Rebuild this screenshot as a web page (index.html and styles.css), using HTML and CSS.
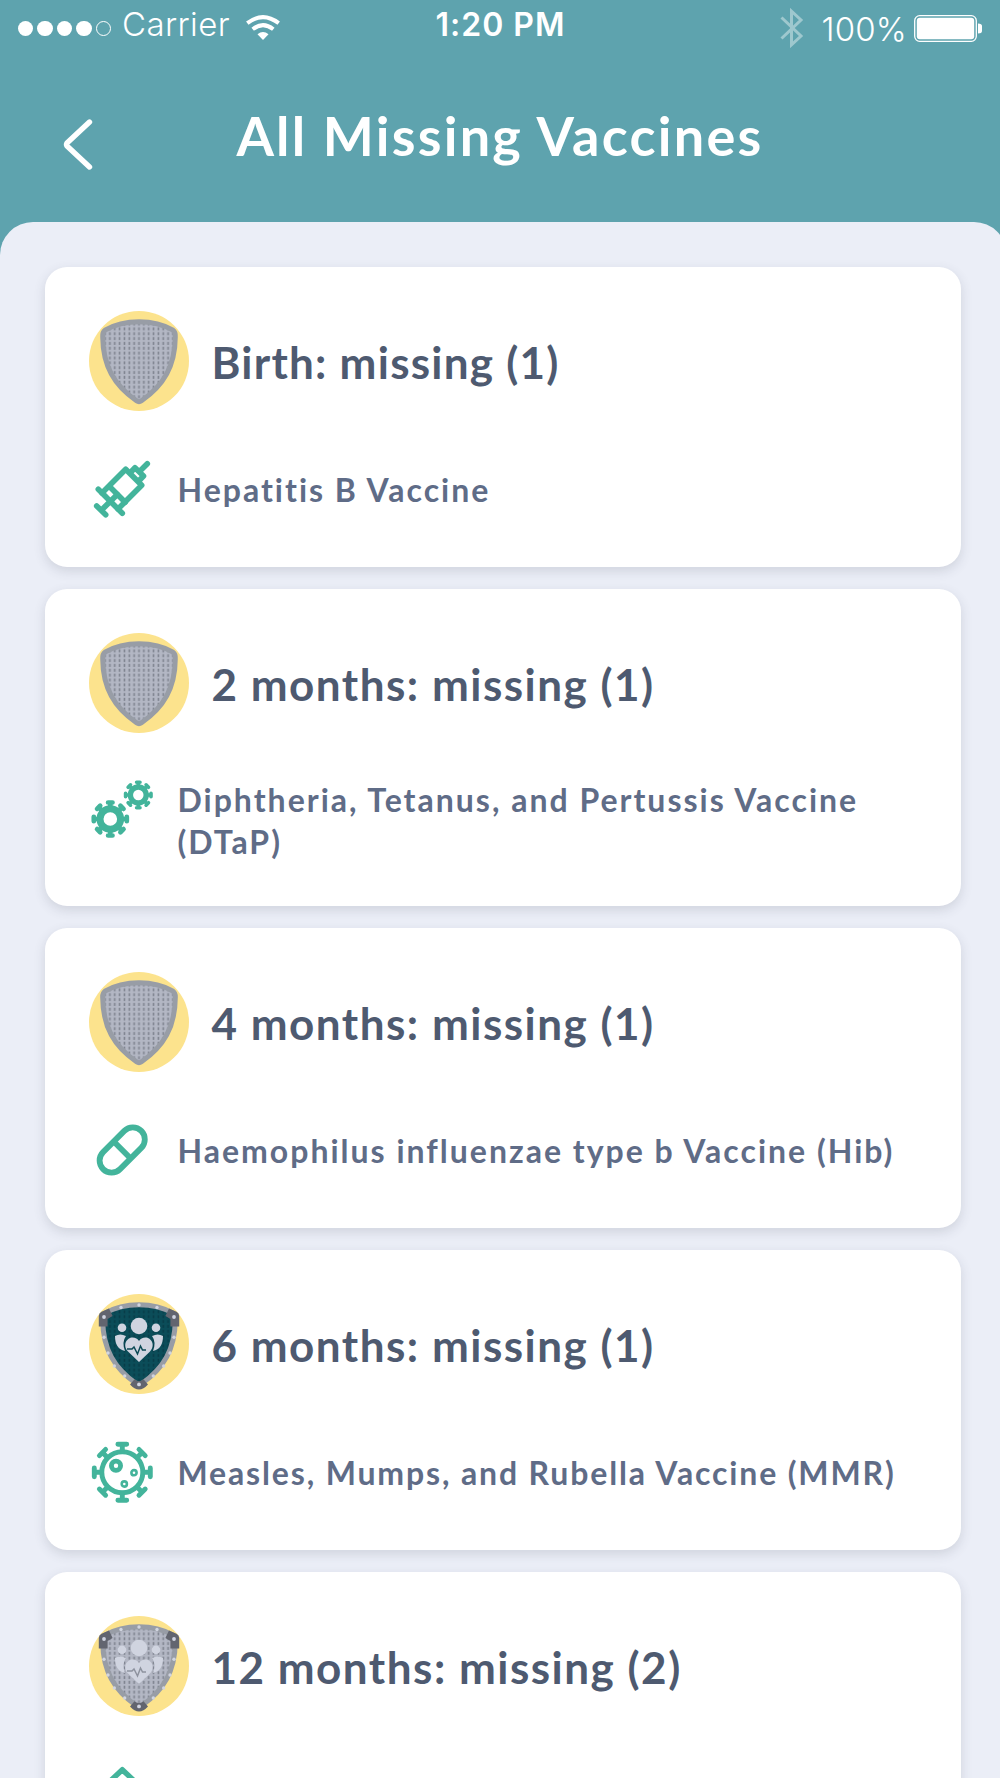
FILE: index.html
```html
<!DOCTYPE html>
<html lang="en">
<head>
    <meta charset="UTF-8">
    <meta name="viewport" content="width=device-width, initial-scale=1.0">
    <title>All Missing Vaccines</title>
    <link rel="stylesheet" href="styles.css">
</head>
<body>
    <!-- Shared shapes -->
    <svg class="defs" width="0" height="0">
        <defs>
            <pattern id="mesh" x="47.6" y="1" width="4.85" height="4.85" patternUnits="userSpaceOnUse">
                <rect width="4.85" height="4.85" fill="#b3b7c4"/>
                <rect x="1.6" y="0.8" width="1.6" height="3" fill="#7f8490"/>
            </pattern>
            <pattern id="mesh-teal" x="47.6" y="1" width="4.85" height="4.85" patternUnits="userSpaceOnUse">
                <rect width="4.85" height="4.85" fill="#0b4d59"/>
                <rect x="1.6" y="0.8" width="1.6" height="3" fill="#083c48"/>
            </pattern>
            <path id="shield" d="M50 10.8 C63 10.8 75 14 84 19.2 Q86.6 21 86.3 26 C86 55 75 74 52.5 89.8 Q50 91.6 47.5 89.8 C25 74 14 55 13.7 26 Q13.4 21 16 19.2 C25 14 37 10.8 50 10.8Z"/>
            <g id="corners" fill="#62656f">
                <path d="M9.8 32.5 V22 Q9.8 19 12.5 17.8 L20 14.4 L23.6 22 L18.6 25 V32.5Z"/>
                <path d="M90.2 32.5 V22 Q90.2 19 87.5 17.8 L80 14.4 L76.4 22 L81.4 25 V32.5Z"/>
                <path d="M45.5 85.2 Q50 89 54.5 85.2 L59 90.5 Q50 100.5 41 90.5Z"/>
            </g>
            <g id="rivets" fill="#d0d4e0">
                <circle cx="50" cy="11" r="1.7"/>
                <circle cx="32" cy="13.5" r="1.7"/><circle cx="68" cy="13.5" r="1.7"/>
                <circle cx="15" cy="23" r="1.9"/><circle cx="85" cy="23" r="1.9"/>
                <circle cx="15" cy="43.3" r="1.7"/><circle cx="85" cy="43.3" r="1.7"/>
                <circle cx="19" cy="59" r="1.7"/><circle cx="81" cy="59" r="1.7"/>
                <circle cx="25.3" cy="72" r="1.7"/><circle cx="74.7" cy="72" r="1.7"/>
                <circle cx="35.7" cy="82" r="1.7"/><circle cx="64.3" cy="82" r="1.7"/>
                <circle cx="50" cy="90.4" r="1.9"/>
            </g>
            <g id="family" fill="#d0d4e0">
                <circle cx="50" cy="32" r="8.3"/>
                <circle cx="33" cy="33.7" r="4.3"/>
                <circle cx="67" cy="33.7" r="4.3"/>
                <path d="M26 42 Q31 39 37 42 Q32.5 48 36 57 Q26 55 26 42Z"/>
                <path d="M74 42 Q69 39 63 42 Q67.5 48 64 57 Q74 55 74 42Z"/>
                <path d="M50 68 L39 57.5 C33 51 38 43.5 43.5 43.5 Q48 43.5 50 47 Q52 43.5 56.5 43.5 C62 43.5 67 51 61 57.5Z"/>
            </g>
            <path id="pulse" d="M38 55 H43 L45 53 L48.5 60 L51.5 52 L53.5 56 H57" fill="none" stroke-width="1.5"/>
            <path id="spike" d="M0 -12 V-16.500 M-2.2 -16.500 H2.2"/>
            <g id="gear" stroke="#43b49b" stroke-width="4.700" stroke-linecap="round" fill="none">
                <circle r="10.3" stroke-width="7"/>
                <use href="#spike"/>
                <use href="#spike" transform="rotate(45)"/>
                <use href="#spike" transform="rotate(90)"/>
                <use href="#spike" transform="rotate(135)"/>
                <use href="#spike" transform="rotate(180)"/>
                <use href="#spike" transform="rotate(225)"/>
                <use href="#spike" transform="rotate(270)"/>
                <use href="#spike" transform="rotate(315)"/>
            </g>
            <path id="arm" d="M0 -21 V-28 M-4.4 -28 H4.4"/>
        </defs>
    </svg>

    <header class="header">
        <div class="status-bar">
            <div class="status-left">
                <div class="signal">
                    <span class="dot"></span>
                    <span class="dot"></span>
                    <span class="dot"></span>
                    <span class="dot"></span>
                    <span class="dot empty"></span>
                </div>
                <span class="carrier">Carrier</span>
                <svg class="wifi" width="34" height="26" viewBox="0 0 34 26" fill="none" stroke="#fff">
                    <path d="M1.3 8.2 Q17 -3.9 32.7 8.2" stroke-width="4"/>
                    <path d="M6.7 14.2 Q17 6 27.3 14.2" stroke-width="4"/>
                    <path d="M11.5 19.3 Q17 14.8 22.5 19.3 L17 25Z" fill="#fff" stroke="none"/>
                </svg>
            </div>
            <span class="time">1:20 PM</span>
            <div class="status-right">
                <svg class="bluetooth" width="24" height="40" viewBox="0 0 24 40" fill="none" stroke="#fff" stroke-width="3">
                    <path d="M1.5 9.5 L21 28 L11.5 36.8 V3.2 L21 12 L1.5 30.5"/>
                </svg>
                <span class="percent">100%</span>
                <svg class="battery" width="69" height="28" viewBox="0 0 69 28">
                    <rect x="0.7" y="0.7" width="61.6" height="25.6" rx="5" fill="none" stroke="#fff" stroke-width="1.3"/>
                    <rect x="2.8" y="2.8" width="57.4" height="21.4" rx="3" fill="#fff"/>
                    <path d="M64 8.5 Q68 8.5 68 11 V16 Q68 18.5 64 18.5Z" fill="#fff"/>
                </svg>
            </div>
        </div>
        <div class="title-bar">
            <svg class="back" width="30" height="54" viewBox="0 0 30 54" fill="none" stroke="#fff" stroke-width="5.4" stroke-linecap="round" stroke-linejoin="round">
                <path d="M26.5 4 L4 25 Q3 26.5 4 28 L26.5 49"/>
            </svg>
            <h1>All Missing Vaccines</h1>
        </div>
    </header>

    <main class="content">
        <section class="card">
            <div class="card-header">
                <svg class="badge" viewBox="0 0 100 100">
                    <circle cx="50" cy="50" r="50" fill="#fce38d"/>
                    <use href="#shield" fill="url(#mesh)" stroke="#989da6" stroke-width="5"/>
                </svg>
                <h2 class="birth">Birth: missing (1)</h2>
            </div>
            <div class="vaccine">
                <svg class="icon" viewBox="0 0 66 66" fill="none" stroke="#43b49b" stroke-width="5.6" stroke-linecap="round" stroke-linejoin="round">
                    <path d="M58.3 6.7 L51 14 M41.5 15.5 L46 10.8 L54.5 19 L50 23.7"/>
                    <path d="M13 36 L36.7 12.3 L52.7 28.3 L29 52"/>
                    <path d="M9.3 32.3 L33.3 56.3 M20.5 29.5 L36.2 45.2"/>
                    <path d="M28.3 37.5 L12.3 53.3 M7.7 49 L16.7 57.7"/>
                </svg>
                <p>Hepatitis B Vaccine</p>
            </div>
        </section>

        <section class="card">
            <div class="card-header">
                <svg class="badge" viewBox="0 0 100 100">
                    <circle cx="50" cy="50" r="50" fill="#fce38d"/>
                    <use href="#shield" fill="url(#mesh)" stroke="#989da6" stroke-width="5"/>
                </svg>
                <h2>2 months: missing (1)</h2>
            </div>
            <div class="vaccine two-lines">
                <svg class="icon" viewBox="0 0 66 66">
                    <use href="#gear" transform="translate(21.3 40)"/>
                    <use href="#gear" transform="translate(49.3 16) scale(0.77)"/>
                </svg>
                <p>Diphtheria, Tetanus, and Pertussis Vaccine<br>(DTaP)</p>
            </div>
        </section>

        <section class="card">
            <div class="card-header">
                <svg class="badge" viewBox="0 0 100 100">
                    <circle cx="50" cy="50" r="50" fill="#fce38d"/>
                    <use href="#shield" fill="url(#mesh)" stroke="#989da6" stroke-width="5"/>
                </svg>
                <h2>4 months: missing (1)</h2>
            </div>
            <div class="vaccine">
                <svg class="icon" viewBox="0 0 66 66" fill="none" stroke="#43b49b" stroke-width="5.8">
                    <g transform="translate(33.2 32) rotate(-45)">
                        <rect x="-27" y="-12" width="54" height="24" rx="12"/>
                        <path d="M0 -12 V12"/>
                    </g>
                </svg>
                <p>Haemophilus influenzae type b Vaccine (Hib)</p>
            </div>
        </section>

        <section class="card">
            <div class="card-header">
                <svg class="badge" viewBox="0 0 100 100">
                    <circle cx="50" cy="50" r="50" fill="#fce38d"/>
                    <use href="#shield" fill="url(#mesh-teal)" stroke="#989da6" stroke-width="5"/>
                    <use href="#corners"/>
                    <use href="#rivets"/>
                    <use href="#family"/>
                    <use href="#pulse" stroke="#0b4854"/>
                </svg>
                <h2>6 months: missing (1)</h2>
            </div>
            <div class="vaccine">
                <svg class="icon" viewBox="0 0 66 66">
                    <g transform="translate(33.3 32.3)" fill="none" stroke="#43b49b" stroke-width="4.9" stroke-linecap="round">
                        <circle r="20.5"/>
                        <use href="#arm"/>
                        <use href="#arm" transform="rotate(45)"/>
                        <use href="#arm" transform="rotate(90)"/>
                        <use href="#arm" transform="rotate(135)"/>
                        <use href="#arm" transform="rotate(180)"/>
                        <use href="#arm" transform="rotate(225)"/>
                        <use href="#arm" transform="rotate(270)"/>
                        <use href="#arm" transform="rotate(315)"/>
                        <circle cx="-6.3" cy="-6.6" r="4.6" stroke-width="4.8"/>
                        <circle cx="11.7" cy="0.4" r="2.6" stroke-width="2.6"/>
                        <circle cx="2" cy="11.7" r="2.6" stroke-width="2.6"/>
                    </g>
                </svg>
                <p class="mmr">Measles, Mumps, and Rubella Vaccine (MMR)</p>
            </div>
        </section>

        <section class="card">
            <div class="card-header">
                <svg class="badge" viewBox="0 0 100 100">
                    <circle cx="50" cy="50" r="50" fill="#fce38d"/>
                    <use href="#shield" fill="url(#mesh)" stroke="#989da6" stroke-width="5"/>
                    <use href="#corners"/>
                    <use href="#rivets"/>
                    <use href="#family"/>
                    <use href="#pulse" stroke="#8d929e"/>
                </svg>
                <h2>12 months: missing (2)</h2>
            </div>
            <div class="vaccine">
                <svg class="icon" viewBox="0 0 66 66" fill="none" stroke="#43b49b" stroke-width="5.4" stroke-linejoin="round">
                    <path d="M33.3 7.7 L58 31 L33.3 56 L8.6 31Z"/>
                </svg>
            </div>
        </section>
    </main>
</body>
</html>
```
FILE: styles.css
```css
* {
    box-sizing: border-box;
}

body {
    margin: 0;
    height: 1778px;
    overflow: hidden;
    font-family: Lato, 'Open Sans', sans-serif;
    background: #5ea3ae;
}

h1, h2, p {
    margin: 0;
    white-space: nowrap;
}

svg {
    display: block;
    flex-shrink: 0;
}

.defs {
    height: 0;
}

/* Header */
.header {
    height: 222px;
    color: #fff;
}

.status-bar {
    display: grid;
    grid-template-columns: 1fr auto 1fr;
    height: 56px;
    padding: 0 17px 0 18px;
    font-family: Inter, 'Liberation Sans', sans-serif;
    font-size: 32px;
    line-height: 40px;
}

.status-left, .status-right {
    display: flex;
    align-items: flex-start;
}

.status-right {
    justify-content: flex-end;
}

.signal {
    display: flex;
    gap: 4px;
    padding-top: 21px;
}

.dot {
    width: 15.4px;
    height: 15.4px;
    border-radius: 50%;
    background: #fff;
}

.dot.empty {
    background: none;
    border: 1px solid #fff;
}

.carrier {
    margin: 4px 0 0 11px;
    width: 107px;
    font-size: 33px;
    font-weight: 300;
    letter-spacing: 0.4px;
}

.wifi {
    margin: 15px 0 0 17px;
}

.time {
    margin-top: 5px;
    font-weight: 600;
    letter-spacing: 1px;
}

.bluetooth {
    margin: 8px 18px 0 0;
    opacity: 0.4;
}

.percent {
    margin: 9px 7px 0 0;
    font-size: 33px;
    font-weight: 300;
    letter-spacing: 0.2px;
}

.battery {
    margin-top: 15px;
}

.title-bar {
    display: grid;
    grid-template-columns: 170px 1fr 170px;
    padding: 0 63px;
    height: 166px;
}

.back {
    margin-top: 62px;
}

.title-bar h1 {
    justify-self: center;
    margin-top: 46px;
    font-size: 54px;
    line-height: 68px;
    letter-spacing: 2.25px;
}

/* Cards */
.content {
    width: 1007px;
    height: 1556px;
    padding: 45px 46px 0 44.5px;
    border-radius: 33px 33px 0 0;
    background: #ebeef7;
    display: flex;
    flex-direction: column;
    gap: 22px;
    overflow: hidden;
}

.card {
    flex-shrink: 0;
    padding: 44px;
    border-radius: 22px;
    background: #fff;
    box-shadow: 0 4px 12px rgba(60, 70, 90, 0.16);
}

.card-header {
    display: flex;
    align-items: center;
    gap: 23px;
    margin-bottom: 46px;
}

.badge {
    width: 100px;
    height: 100px;
}

.card h2 {
    padding-top: 2px;
    font-size: 44px;
    line-height: 56px;
    letter-spacing: 1.5px;
    color: #4e5a70;
}

.card .birth {
    letter-spacing: 1.25px;
}

.vaccine {
    display: flex;
    align-items: flex-start;
    gap: 23px;
    height: 66px;
}

.vaccine.two-lines {
    height: 83px;
}

.icon {
    width: 66px;
    height: 66px;
}

.vaccine p {
    align-self: center;
    font-size: 32px;
    line-height: 41.5px;
    font-weight: 700;
    letter-spacing: 2px;
    color: #5f6c87;
}

.vaccine .mmr {
    letter-spacing: 1.85px;
}
```
